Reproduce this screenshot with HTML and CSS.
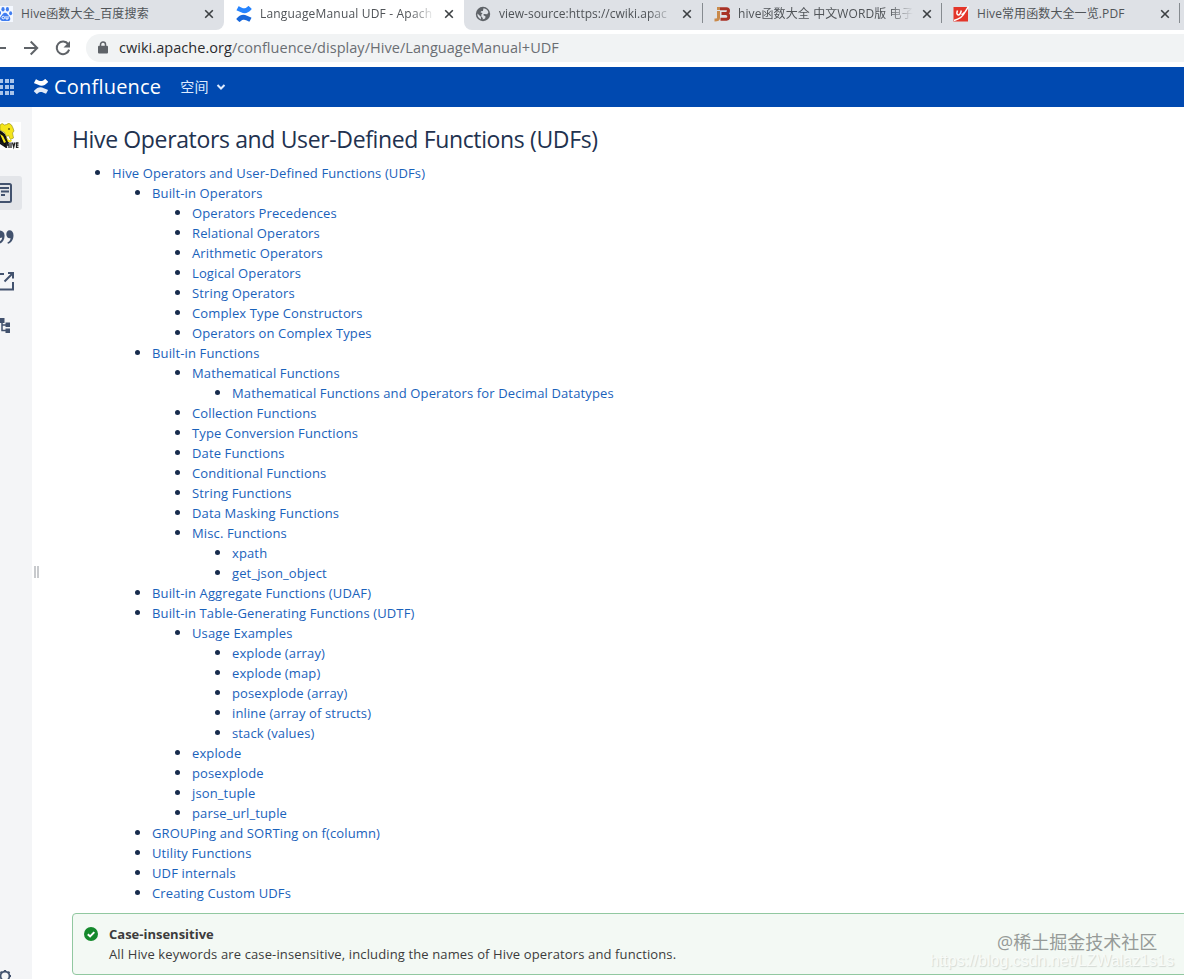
FILE: index.html
```html
<!DOCTYPE html>
<html lang="zh-CN">
	<head>
		<meta charset="utf-8">
		<title>LanguageManual UDF - Apache Hive</title>
		<link rel="stylesheet" href="styles.css">
	</head>
	<body>
		<div id="tabs">
			<div class="tab first">
				<svg class="fav" viewBox="0 0 16 16"><rect width="16" height="16" fill="#f4f8ff"/><g fill="#3f7df0"><ellipse cx="2.600" cy="7" rx="1.500" ry="2"/><ellipse cx="6" cy="3.200" rx="1.600" ry="2.200"/><ellipse cx="10.400" cy="3.200" rx="1.600" ry="2.200"/><ellipse cx="13.600" cy="7.200" rx="1.500" ry="2"/><path d="M8 6.800c-2 0-2.400 2-4 3.400-1.700 1.500-1.300 4.900 1.500 4.900h5.300c2.900 0 3.100-3.200 1.500-4.800C10.600 8.800 10 6.800 8 6.800z"/></g><g fill="none" stroke="#fff"><circle cx="6.300" cy="11.600" r="1.300"/><path d="M9 10v3h2v-3"/></g></svg>
				<span class="title">Hive函数大全_百度搜索</span>
				<svg class="close" viewBox="0 0 10 10"><path d="M1.200 1.200l7.600 7.600M8.800 1.200l-7.600 7.600"/></svg>
			</div>
			<div class="tab active">
				<svg class="fav" viewBox="0 0 16 16"><path fill="#2684ff" d="M.6 3.900L2.300.7c.2-.4.600-.4 1-.2C5.700 1.700 7 2.500 8.700 2.200 10.400 2 11.400.7 12 .2c.3-.2.700-.2.900.1l2.500 2.300c.3.300.3.600 0 .9C11.500 7.700 8.500 7.900 5 6.200L.9 4.600C.6 4.500.4 4.200.6 3.900z"/><path fill="#1868db" d="M15.400 12.100l-1.700 3.200c-.2.400-.6.400-1 .2-2.400-1.200-3.700-2-5.400-1.700-1.700.2-2.700 1.500-3.300 2-.3.200-.7.200-.9-.1L.6 13.400c-.3-.3-.3-.6 0-.9C4.500 8.300 7.500 8.100 11 9.800l4.100 1.600c.3.100.5.400.3.700z"/></svg>
				<span class="title fade">LanguageManual UDF - Apach</span>
				<svg class="close" viewBox="0 0 10 10"><path d="M1.200 1.200l7.600 7.600M8.800 1.200l-7.600 7.600"/></svg>
			</div>
			<div class="tab source">
				<svg class="fav" viewBox="0 0 16 16"><circle cx="8" cy="8" r="7.200" fill="#5f6368"/><path fill="#dee1e6" d="M2.400 7.600l3.500 3.200v2.600C3.600 12.400 2.200 10.300 2.400 7.600zM8.500 2.300c2.500.2 4.300 1.800 4.900 3.900l-1.200 2-3.200-.3-.8 1.200 2.400 1.300-.5 2-2.400 1.200.1-1.700-1.500-1.300.1-2.200 1.200-1.500-2-.4.400-1.200 1.900-.2z"/></svg>
				<span class="title fade">view-source:https://cwiki.apac</span>
				<svg class="close" viewBox="0 0 10 10"><path d="M1.200 1.200l7.600 7.600M8.800 1.200l-7.600 7.600"/></svg>
			</div>
			<div class="tab word">
				<svg class="fav" viewBox="0 0 16 16"><path fill="none" stroke="#c98a4b" stroke-width="3" d="M4.500 5v7q0 2-4 2M3 2.500h3"/><path fill="none" stroke="#a93226" stroke-width="3" d="M6 2.800h6.500q2 0 2 2t-2 2.700H7.500M12.500 7.700q2.300.4 2.300 2.900t-2.300 2.700H6.500"/></svg>
				<span class="title fade">hive函数大全 中文WORD版 电子</span>
				<svg class="close" viewBox="0 0 10 10"><path d="M1.200 1.200l7.600 7.600M8.800 1.200l-7.600 7.600"/></svg>
			</div>
			<div class="tab pdf">
				<svg class="fav" viewBox="0 0 16 16"><rect x=".5" y="1" width="14.500" height="14.500" fill="#e33529"/><path fill="none" stroke="#fff" stroke-width="1.500" d="M15.500.5L12 6Q9 12.500 1 14.500M4.500 4.500q-1.500 4 .8 4.500 2 0 3-4.500M8.500 8q1.500.8 3-2"/></svg>
				<span class="title">Hive常用函数大全一览.PDF</span>
				<svg class="close" viewBox="0 0 10 10"><path d="M1.200 1.200l7.600 7.600M8.800 1.200l-7.600 7.600"/></svg>
			</div>
		</div>

		<div id="toolbar">
			<svg class="back" viewBox="0 0 6 16"><path d="M0 8h6"/></svg>
			<svg class="forward" viewBox="0 0 16 16"><path d="M1 8h13M7.700 1.500L14.200 8l-6.500 6.500"/></svg>
			<svg class="reload" viewBox="0 0 16 16"><path d="M13.200 4.200A6.300 6.300 0 1 0 14.100 9.600"/><path class="solid" d="M15 1v6.500H8.500z"/></svg>
			<div id="address">
				<svg class="lock" viewBox="0 0 10 13"><path fill="none" stroke="#5f6368" stroke-width="1.500" d="M2.500 5V3.500a2.500 2.500 0 0 1 5 0V5"/><rect y="4.800" width="10" height="7.700" rx="1" fill="#5f6368"/></svg>
				<span class="url"><b>cwiki.apache.org</b>/confluence/display/Hive/LanguageManual+UDF</span>
			</div>
		</div>

		<div id="header">
			<svg class="apps" viewBox="0 0 14 16"><path d="M0 0h3v4H0zM5 0h4v4H5zM10 0h4v4h-4zM0 6h3v4H0zM5 6h4v4H5zM10 6h4v4h-4zM0 12h3v4H0zM5 12h4v4H5zM10 12h4v4h-4z"/></svg>
			<svg class="mark" viewBox="0 0 16 16"><path fill="#fff" d="M.6 3.900L2.300.7c.2-.4.600-.4 1-.2C5.700 1.700 7 2.500 8.700 2.200 10.400 2 11.400.7 12 .2c.3-.2.700-.2.900.1l2.500 2.300c.3.300.3.600 0 .9C11.500 7.700 8.500 7.900 5 6.200L.9 4.600C.6 4.500.4 4.200.6 3.900z"/><path fill="#e2eaf7" d="M15.400 12.100l-1.700 3.200c-.2.400-.6.400-1 .2-2.400-1.200-3.700-2-5.400-1.700-1.700.2-2.700 1.500-3.300 2-.3.200-.7.200-.9-.1L.6 13.400c-.3-.3-.3-.6 0-.9C4.500 8.300 7.500 8.100 11 9.800l4.100 1.600c.3.100.5.400.3.700z"/></svg>
			<span class="brand">Confluence</span>
			<span class="spaces">空间</span>
			<svg class="chevron" viewBox="0 0 10 8"><path d="M1.500 2L5 5.500 8.500 2"/></svg>
		</div>

		<div id="main">
			<div id="sidebar">
				<svg class="logo" viewBox="0 0 21 28"><rect width="21" height="28" fill="#fff"/><path fill="#111" d="M0 8l5 4 4 8-3 6-6-4z"/><path fill="#f5e51b" stroke="#8f8a20" stroke-width=".6" d="M0 3Q2 0 4.500 3l2-.500Q9 0 11.500 3l1.500 3 1 3-1.500 2 1 5-3 1.500-2-4-2 1-2-4L0 8z"/><path fill="#f5e51b" d="M0 12l3 2 3 6-2 1zM6 15l3 3 3 0-1 2H8z"/><circle cx="9" cy="7" r=".8"/><g fill="none" stroke="#222" stroke-width="1.300"><path d="M0 20l4 3M6.500 20.500v5.500M9 20.500v5.500M6.500 23h2.500M11 20.500v5.500M12.500 20.500l1.200 4.500 1.200-4.500M18.500 21h-2v4.400h2M16.500 23.200h2"/></g></svg>
				<div class="item selected">
					<svg viewBox="0 0 12 20"><path d="M0 1h9.500q1.500 0 1.500 1.500v15q0 1.500-1.500 1.500H0M0 5h9M1 8.500h8M1 12h4"/></svg>
				</div>
				<div class="item">
					<svg class="quote" viewBox="0 0 14 20"><path d="M0 3.500c2.700.2 4.600 2 4.600 5.200 0 4-2 6.800-4.600 7.800v-2.300c1.300-.9 2-2 2.200-3.700L0 11zM9.400 3.200c2.600 0 4.100 2 4.100 5 0 4.600-2.400 7.600-5.600 8.600l-.5-1.300c2-.9 3-2.400 3.200-4.300-2.300.6-4.300-1.200-4.300-3.900 0-2.300 1.300-4.100 3.100-4.100z"/></svg>
				</div>
				<div class="item">
					<svg viewBox="0 0 14 20"><path d="M0 3h4M8 2h5v5.500M13 2L4.500 10.500M13 11v7.500H0"/></svg>
				</div>
				<div class="item">
					<svg class="tree" viewBox="0 0 12 20"><path d="M0 3h4.500v5H0zM5.500 7.500H10v4.500H5.500zM5.500 13.500H10V18H5.500z"/><path fill="none" stroke="#42526e" stroke-width="1.500" d="M2 7v8.500h4M2 10h4"/></svg>
				</div>
				<svg class="gear" viewBox="0 0 13 10"><circle cx="5" cy="7" r="4.500" fill="none" stroke="#42526e" stroke-width="1.800"/><path stroke="#42526e" stroke-width="2" d="M5 2.500V1M8.200 4L9.500 2.700M1.800 4L.5 2.700M9.500 7h1.500"/></svg>
			</div>
			<div id="splitter"><i></i><i></i></div>

			<div id="content">
				<h1>Hive Operators and User-Defined Functions (UDFs)</h1>
				<ul class="toc">
					<li><a>Hive Operators and User-Defined Functions (UDFs)</a>
						<ul>
							<li><a>Built-in Operators</a>
								<ul>
									<li><a>Operators Precedences</a></li>
									<li><a>Relational Operators</a></li>
									<li><a>Arithmetic Operators</a></li>
									<li><a>Logical Operators</a></li>
									<li><a>String Operators</a></li>
									<li><a>Complex Type Constructors</a></li>
									<li><a>Operators on Complex Types</a></li>
								</ul>
							</li>
							<li><a>Built-in Functions</a>
								<ul>
									<li><a>Mathematical Functions</a>
										<ul>
											<li><a>Mathematical Functions and Operators for Decimal Datatypes</a></li>
										</ul>
									</li>
									<li><a>Collection Functions</a></li>
									<li><a>Type Conversion Functions</a></li>
									<li><a>Date Functions</a></li>
									<li><a>Conditional Functions</a></li>
									<li><a>String Functions</a></li>
									<li><a>Data Masking Functions</a></li>
									<li><a>Misc. Functions</a>
										<ul>
											<li><a>xpath</a></li>
											<li><a>get_json_object</a></li>
										</ul>
									</li>
								</ul>
							</li>
							<li><a>Built-in Aggregate Functions (UDAF)</a></li>
							<li><a>Built-in Table-Generating Functions (UDTF)</a>
								<ul>
									<li><a>Usage Examples</a>
										<ul>
											<li><a>explode (array)</a></li>
											<li><a>explode (map)</a></li>
											<li><a>posexplode (array)</a></li>
											<li><a>inline (array of structs)</a></li>
											<li><a>stack (values)</a></li>
										</ul>
									</li>
									<li><a>explode</a></li>
									<li><a>posexplode</a></li>
									<li><a>json_tuple</a></li>
									<li><a>parse_url_tuple</a></li>
								</ul>
							</li>
							<li><a>GROUPing and SORTing on f(column)</a></li>
							<li><a>Utility Functions</a></li>
							<li><a>UDF internals</a></li>
							<li><a>Creating Custom UDFs</a></li>
						</ul>
					</li>
				</ul>

				<div class="tip">
					<svg viewBox="0 0 14 14"><circle cx="7" cy="7" r="7" fill="#14892c"/><path fill="none" stroke="#fff" stroke-width="2" d="M3.800 7.200l2.300 2.200 4.200-4.300"/></svg>
					<div>
						<p class="tip-title">Case-insensitive</p>
						<p>All Hive keywords are case-insensitive, including the names of Hive operators and functions.</p>
					</div>
				</div>
			</div>
		</div>

		<div class="watermark community">@稀土掘金技术社区</div>
		<div class="watermark blog">https://blog.csdn.net/LZWalaz1s1s</div>
	</body>
</html>
```
FILE: styles.css
```css
* {
	box-sizing: border-box;
}
html, body {
	height: 100%;
}
body {
	margin: 0;
	display: flex;
	flex-direction: column;
	position: relative;
	overflow: hidden;
	background: #fff;
	color: #172b4d;
	font-family: "Open Sans", "Noto Sans CJK SC", sans-serif;
	font-size: 13px;
}
svg {
	flex: none;
	display: block;
}

/* browser tabs */
#tabs {
	display: flex;
	flex: none;
	height: 30px;
	background: #fff;
	font-size: 12px;
	color: #505458;
}
.tab {
	display: flex;
	align-items: center;
	flex: none;
	width: 239px;
	height: 30px;
	padding: 0 10px 3px 11px;
	background: #dee1e6;
	position: relative;
}
.tab.first {
	width: 224px;
	padding-left: 0;
	border-bottom-right-radius: 8px;
	letter-spacing: 0.15px;
}
.tab.first .fav {
	margin-left: -3px;
}
.tab.active {
	width: 240px;
	padding-left: 12px;
	background: #fff;
	letter-spacing: 0.18px;
}
.tab.source {
	border-bottom-left-radius: 8px;
	border-right: 1px solid #dee1e6;
}
.tab.word {
	letter-spacing: 0.1px;
}
.tab.pdf {
	width: 242px;
	padding-right: 14px;
	letter-spacing: 0.1px;
}
.tab.word::before, .tab.pdf::before, .tab.pdf::after {
	content: "";
	position: absolute;
	left: -1px;
	top: 3px;
	width: 1px;
	height: 20px;
	background: #868b90;
}
.tab.pdf::after {
	left: 237px;
}
.fav {
	width: 16px;
	height: 16px;
	margin-right: 8px;
}
.title {
	flex: 1;
	min-width: 0;
	white-space: nowrap;
	line-height: 20px;
	margin-top: 1px;
}
.fade {
	-webkit-mask-image: linear-gradient(to right, #000 86%, transparent);
	mask-image: linear-gradient(to right, #000 86%, transparent);
}
.close {
	width: 10px;
	height: 10px;
	margin-left: 9px;
	fill: none;
	stroke: #3c4043;
	stroke-width: 1.600;
}

/* address bar */
#toolbar {
	display: flex;
	flex: none;
	align-items: center;
	height: 37px;
	padding-bottom: 2px;
	background: #fff;
}
#toolbar > svg {
	height: 16px;
	fill: none;
	stroke: #5f6368;
	stroke-width: 2;
}
#toolbar .back {
	width: 6px;
}
#toolbar .forward {
	width: 16px;
	margin-left: 17px;
}
#toolbar .reload {
	width: 16px;
	margin-left: 16px;
}
#toolbar .solid {
	fill: #5f6368;
	stroke: none;
}
#address {
	display: flex;
	align-items: center;
	flex: 1;
	height: 28px;
	margin-left: 15px;
	padding-left: 12px;
	background: #f1f3f4;
	border-radius: 14px 0 0 14px;
}
.lock {
	width: 10px;
	height: 13px;
}
.url {
	margin-left: 11px;
	font-size: 14.5px;
	letter-spacing: 0.04px;
	color: #6a6e73;
}
.url b {
	font-weight: normal;
	color: #2b2c2f;
}

/* confluence header */
#header {
	display: flex;
	flex: none;
	align-items: center;
	height: 40px;
	padding-bottom: 2px;
	background: #0049b0;
	color: #fff;
}
.apps {
	width: 14px;
	height: 16px;
	margin-top: 2px;
	fill: #a9c4ea;
}
.mark {
	width: 16px;
	height: 15px;
	margin-left: 19px;
}
.brand {
	margin-left: 5px;
	font-size: 20px;
	letter-spacing: 0.2px;
}
.spaces {
	margin-left: 19px;
	font-size: 14px;
	letter-spacing: 0.3px;
	color: #deebff;
}
.chevron {
	width: 10px;
	height: 8px;
	margin: 2px 0 0 7px;
	fill: none;
	stroke: #deebff;
	stroke-width: 2;
}

/* page */
#main {
	display: flex;
	flex: 1;
	min-height: 0;
}
#sidebar {
	display: flex;
	flex-direction: column;
	flex: none;
	width: 32px;
	background: #f4f5f7;
}
.logo {
	width: 21px;
	height: 28px;
	margin: 15px 0 26px;
}
.item {
	display: flex;
	align-items: center;
	width: 22px;
	height: 34px;
	margin-bottom: 10px;
	border-radius: 0 3px 3px 0;
}
.item.selected {
	background: #e3e5e9;
}
.item svg {
	height: 20px;
	fill: none;
	stroke: #42526e;
	stroke-width: 2;
}
.item .quote, .item .tree {
	fill: #42526e;
	stroke: none;
}
.gear {
	width: 13px;
	height: 10px;
	margin-top: auto;
}
#splitter {
	display: flex;
	align-items: flex-start;
	gap: 1px;
	flex: none;
	width: 40px;
	padding: 459px 0 0 2px;
}
#splitter i {
	width: 2px;
	height: 12px;
	background: #c8cacd;
}
#content {
	flex: 1;
	min-width: 0;
}
h1 {
	margin: 17px 0 9px;
	font-size: 23px;
	font-weight: normal;
	letter-spacing: -0.36px;
	line-height: 30px;
	color: #22324f;
}
.toc, .toc ul {
	margin: 0;
	padding-left: 40px;
	list-style: disc;
}
.toc {
	font-size: 14px;
	line-height: 20px;
}
.toc a {
	font-size: 13px;
	letter-spacing: 0.13px;
	color: #1a62bb;
}
.tip {
	display: flex;
	width: 1130px;
	height: 62px;
	margin-top: 10px;
	padding: 10px 12px;
	border: 1px solid #91c8a0;
	border-radius: 4px;
	background: #f3f9f4;
	color: #3c3c3c;
	letter-spacing: 0.13px;
	line-height: 20px;
}
.tip svg {
	width: 14px;
	height: 14px;
	margin: 3px 11px 0 -1px;
}
.tip p {
	margin: 0;
}
.tip .tip-title {
	font-weight: bold;
	letter-spacing: 0;
}

.watermark {
	position: absolute;
	white-space: nowrap;
}
.community {
	left: 997px;
	top: 930px;
	font-size: 18px;
	line-height: 24px;
	color: #969b98;
}
.blog {
	left: 930px;
	top: 951px;
	font-family: "Liberation Sans", sans-serif;
	font-size: 16px;
	line-height: 20px;
	color: #f8fbf8;
	text-shadow: 1px 1px 1px #d3d9d4;
}
```
